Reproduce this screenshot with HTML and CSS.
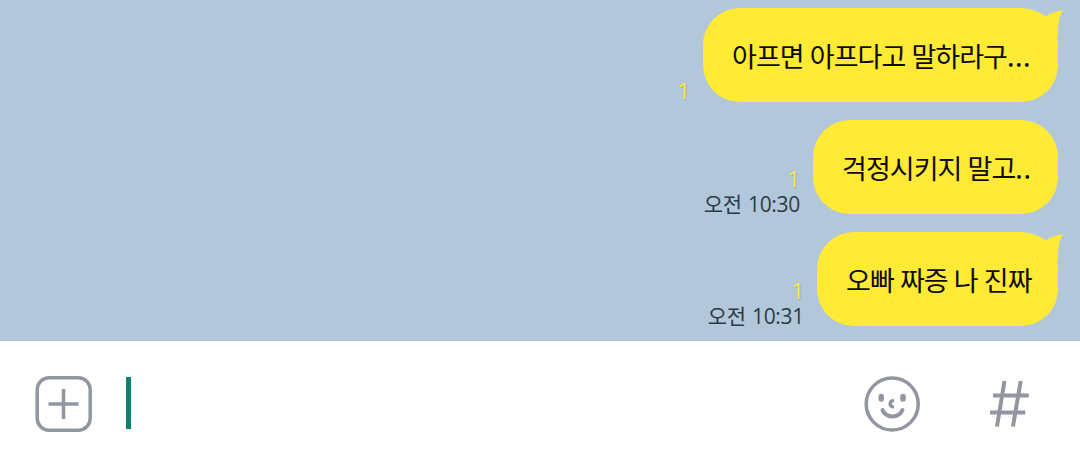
FILE: index.html
```
<!DOCTYPE html>
<html lang="ko">
<head>
    <meta charset="UTF-8">
    <meta name="viewport" content="width=device-width, initial-scale=1.0">
    <title>채팅</title>
    <link rel="stylesheet" href="styles.css">
</head>
<body>
    <div class="chat">
        <div class="message">
            <div class="info">
                <span class="unread">1</span>
            </div>
            <div class="bubble bubble-long">
                <span>아프면 아프다고 말하라구<span class="dots">...</span></span>
                <svg class="tail" viewBox="0 0 24 28"><path d="M0 4 L7 8.5 Q14 3 24 2.5 Q19 9 19 24 L19 28 L0 28 Z"/></svg>
            </div>
        </div>
        <div class="message">
            <div class="info">
                <span class="unread">1</span>
                <span class="time">오전 10:30</span>
            </div>
            <div class="bubble bubble-mid">
                <span>걱정시키지 말고<span class="dots">..</span></span>
            </div>
        </div>
        <div class="message">
            <div class="info">
                <span class="unread">1</span>
                <span class="time">오전 10:31</span>
            </div>
            <div class="bubble bubble-short">
                <span>오빠 짜증 나 진짜</span>
                <svg class="tail" viewBox="0 0 24 28"><path d="M0 4 L7 8.5 Q14 3 24 2.5 Q19 9 19 24 L19 28 L0 28 Z"/></svg>
            </div>
        </div>
    </div>

    <div class="input-bar">
        <svg class="icon icon-plus" viewBox="0 0 58 58">
            <rect x="3.2" y="2.7" width="53" height="52.5" rx="12"/>
            <path d="M29.5 14V44M14.5 29H44.5"/>
        </svg>
        <div class="cursor"></div>
        <svg class="icon icon-smile" viewBox="0 0 58 58">
            <circle cx="29.2" cy="29" r="26"/>
            <path class="eye" d="M18.2 21.5v2.5M40 21.5v2.5"/>
            <path class="mouth" d="M19.5 35C23 43.5 36 43.5 39.5 35"/>
            <path class="nose" d="M29.6 25.7C26.4 26.7 26.4 30.8 29.6 31.8"/>
        </svg>
        <svg class="icon icon-hash" viewBox="0 0 40 48">
            <path d="M15.5 1L8 46.5M31.7 1L24 46.5M4 15.5H39.7M1 32.5H36.3"/>
        </svg>
    </div>
</body>
</html>
```
FILE: styles.css
```
body {
    margin: 0;
    background: #ffffff;
    font-family: "Noto Sans CJK KR", sans-serif;
}
.chat {
    display: flex;
    flex-direction: column;
    gap: 18px;
    box-sizing: border-box;
    height: 341px;
    padding: 8px 22px 0 0;
    background: #b2c7da;
}
.message {
    display: flex;
    justify-content: flex-end;
    height: 94px;
}
.info {
    display: flex;
    flex-direction: column;
    justify-content: flex-end;
    align-items: flex-end;
    margin-right: 13px;
}
.unread {
    padding-bottom: 1px;
    font-family: "Open Sans", sans-serif;
    font-size: 22px;
    line-height: 22px;
    color: #f9e94a;
    text-shadow: 1px 1px 1px rgba(90, 100, 80, 0.3);
}
.time {
    padding-top: 5px;
    font-family: "Open Sans", "Noto Sans CJK KR", sans-serif;
    font-size: 21px;
    line-height: 19px;
    letter-spacing: -0.3px;
    word-spacing: 1px;
    color: #2c3b48;
    white-space: nowrap;
}
.bubble {
    position: relative;
    box-sizing: border-box;
    padding: 0 0 0 29px;
    border-radius: 37px;
    background: #ffea35;
    color: #0d0b03;
    font-size: 27px;
    line-height: 95px;
    letter-spacing: -0.95px;
    word-spacing: -0.5px;
    white-space: nowrap;
}
.dots {
    letter-spacing: 0.5px;
}
.bubble-long {
    width: 355px;
}
.bubble-mid {
    width: 245px;
}
.bubble-short {
    width: 241px;
}
.tail {
    position: absolute;
    top: 0;
    right: -5px;
    width: 24px;
    height: 28px;
    fill: #ffea35;
}
.input-bar {
    display: flex;
    align-items: center;
    box-sizing: border-box;
    height: 125px;
    padding: 0 51px 1px 34px;
}
.icon {
    margin-top: 1px;
    fill: none;
    stroke: #9296a0;
    stroke-width: 3.5;
}
.icon-plus {
    width: 58px;
    height: 58px;
}
.cursor {
    width: 5px;
    height: 52px;
    margin-left: 34px;
    background: #0b8272;
}
.icon-smile {
    width: 58px;
    height: 58px;
    margin-left: auto;
    stroke-linecap: round;
}
.icon-smile .eye {
    stroke-width: 5.5;
}
.icon-smile .mouth {
    stroke-width: 4;
}
.icon-smile .nose {
    stroke-width: 3.5;
}
.icon-hash {
    width: 40px;
    height: 48px;
    margin-left: 68px;
    stroke-width: 4;
}
```
